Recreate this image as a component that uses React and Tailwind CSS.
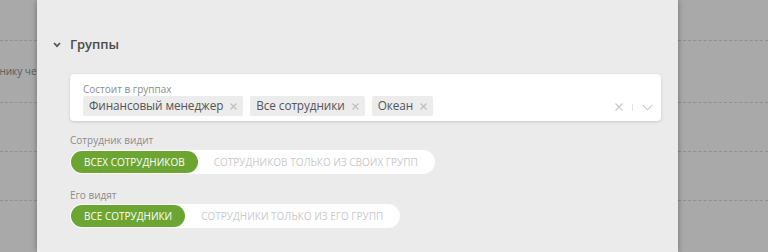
import React from 'react';

const tags = ['Финансовый менеджер', 'Все сотрудники', 'Океан'];

const Backdrop = ({ className = '', withText = false }) => (
  <div className={`flex flex-col bg-[#a9a9a9] ${className}`}>
    <div className="h-[41px] shrink-0 border-b border-dashed border-[#8f8f8f]" />
    <div className="flex h-[62px] shrink-0 items-center overflow-hidden border-b border-dashed border-[#8f8f8f]">
      {withText && (
        <span className="ml-[-33px] whitespace-nowrap text-[10px] text-[#5a5a5a]">
          сотруднику через
        </span>
      )}
    </div>
    <div className="h-[49px] shrink-0 border-b border-dashed border-[#8f8f8f]" />
    <div className="h-[49px] shrink-0 border-b border-dashed border-[#8f8f8f]" />
    <div className="flex-1" />
  </div>
);

const Tag = ({ label }) => (
  <div className="flex h-[20px] items-center gap-[7px] rounded-[2px] bg-[#ececec] pl-[6px] pr-[6px] text-[11.8px] tracking-[-0.1px] text-[#555]">
    <span>{label}</span>
    <svg width="7" height="7" viewBox="0 0 7 7" className="text-[#bdbdbd]">
      <path d="M0.5 0.5 L6.5 6.5 M6.5 0.5 L0.5 6.5" stroke="currentColor" strokeWidth="1.1" />
    </svg>
  </div>
);

const Toggle = ({ active, inactive }) => (
  <div className="flex h-[24px] w-fit items-center rounded-full bg-white p-[1px]">
    <div className="flex h-[22px] items-center rounded-full bg-[#6ca532] px-[13px] text-[10px] uppercase text-white">
      {active}
    </div>
    <div className="flex h-[22px] items-center px-[16px] text-[10px] uppercase text-[#c9c9c9]">
      {inactive}
    </div>
  </div>
);

export default function App() {
  return (
    <div className="flex h-[252px] w-[768px] overflow-hidden bg-[#a9a9a9] font-['Open_Sans',sans-serif]">
      <Backdrop className="w-[37px] shrink-0" withText />

      {/* Panel */}
      <div className="relative z-10 w-[641px] shrink-0 bg-[#ebebeb] shadow-[0_0_6px_rgba(0,0,0,0.35)]">
        {/* Section header */}
        <div className="mt-[35px] flex h-[20px] items-center pl-[16px]">
          <svg width="8" height="6" viewBox="0 0 8 6" className="text-[#555]">
            <path d="M1 1 L4 4.2 L7 1" fill="none" stroke="currentColor" strokeWidth="1.7" />
          </svg>
          <span className="ml-[9px] text-[13px] font-semibold text-[#4a4a4a]">Группы</span>
        </div>

        <div className="pl-[33px]">
          {/* Groups select */}
          <div className="mt-[19px] h-[47px] w-[591px] rounded-[4px] bg-white px-[13px] pt-[8px] shadow-[0_1px_3px_rgba(0,0,0,0.15)]">
            <div className="h-[14px] text-[10px] leading-[14px] text-[#8c8c8c]">Состоит в группах</div>
            <div className="flex items-center">
              <div className="flex flex-1 items-center gap-[7px]">
                {tags.map((t) => (
                  <Tag key={t} label={t} />
                ))}
              </div>
              <div className="mr-[-5px] flex items-center gap-[9px] pt-[2px] text-[#c8c8c8]">
                <svg width="8" height="8" viewBox="0 0 8 8">
                  <path d="M0.5 0.5 L7.5 7.5 M7.5 0.5 L0.5 7.5" stroke="currentColor" strokeWidth="1.1" />
                </svg>
                <div className="h-[7px] w-px bg-[#e2e2e2]" />
                <svg width="11" height="7" viewBox="0 0 11 7">
                  <path d="M0.6 0.8 L5.5 5.8 L10.4 0.8" fill="none" stroke="currentColor" strokeWidth="1.1" />
                </svg>
              </div>
            </div>
          </div>

          {/* Visibility */}
          <div className="mt-[12px] h-[14px] text-[10px] leading-[14px] text-[#8c8c8c]">Сотрудник видит</div>
          <div className="mt-[3px]">
            <Toggle active="Всех сотрудников" inactive="Сотрудников только из своих групп" />
          </div>

          <div className="mt-[14px] h-[14px] text-[10px] leading-[14px] text-[#8c8c8c]">Его видят</div>
          <div className="mt-[2px]">
            <Toggle active="Все сотрудники" inactive="Сотрудники только из его групп" />
          </div>
        </div>
      </div>

      <Backdrop className="flex-1" />
    </div>
  );
}
